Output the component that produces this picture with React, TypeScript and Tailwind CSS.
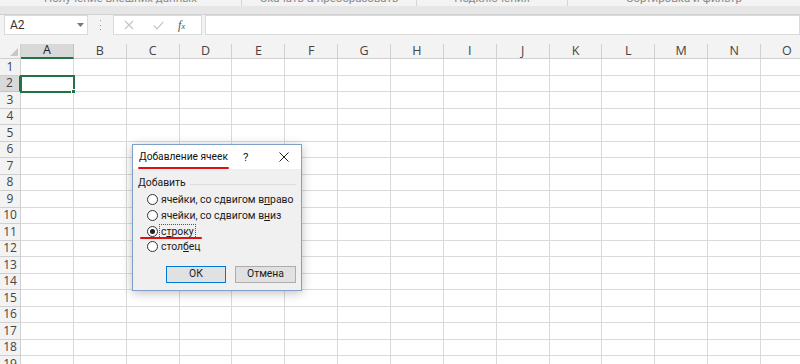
import React from "react";

const COLS = ["A", "B", "C", "D", "E", "F", "G", "H", "I", "J", "K", "L", "M", "N", "O"];
const ROWS = Array.from({ length: 19 }, (_, i) => i + 1);

const ui = { fontFamily: 'Roboto, "Noto Sans", sans-serif' };
const grid = { fontFamily: '"Open Sans", "Noto Sans", sans-serif' };

const Radio = ({ checked, children }: { checked?: boolean; children: React.ReactNode }) => (
  <div className="flex h-[15.7px] items-center whitespace-nowrap pl-[14px]">
    <span className="flex h-[11px] w-[11px] shrink-0 items-center justify-center rounded-full border border-[#333] bg-white">
      {checked && <span className="h-[5px] w-[5px] rounded-full bg-[#222]" />}
    </span>
    <span className={"ml-[2px] px-[1px] leading-[13px] " + (checked ? "outline outline-1 outline-dotted outline-[#555]" : "")}>
      {children}
    </span>
  </div>
);

const Dialog = () => (
  <div
    className="absolute left-[132px] top-[144px] flex h-[147px] w-[170px] flex-col border border-[#7f9fc8] bg-[#f0f0f0] text-[10.4px] text-[#1a1a1a] shadow-[0_2px_10px_rgba(0,0,0,0.25)]"
    style={ui}
  >
    <div className="relative flex h-[24px] items-center bg-white pl-[6px]">
      <span className="text-[10.2px] text-[#111]">Добавление ячеек</span>
      <span className="absolute left-[110px] top-[4px] text-[11.5px]">?</span>
      <svg className="absolute left-[146px] top-[7px]" width="10" height="10" viewBox="0 0 10 10">
        <path d="M0.5 0.5 L9.5 9.5 M9.5 0.5 L0.5 9.5" stroke="#222" strokeWidth="1" />
      </svg>
      {/* red annotation */}
      <div className="absolute left-[5px] top-[22px] h-[2px] w-[91px] rounded-full bg-[#e01010]" />
    </div>
    <div className="flex flex-1 flex-col pt-[7px]">
      <div className="flex h-[14px] items-center pl-[5px] pr-[5px]">
        <span className="leading-[14px]">Добавить</span>
        <span className="ml-[4px] mt-[2px] h-px flex-1 bg-[#dcdcdc]" />
      </div>
      <div className="relative mt-[2px] flex flex-col">
        <Radio>
          ячейки, со сдвигом в<u>п</u>раво
        </Radio>
        <Radio>
          ячейки, со сдвигом в<u>н</u>из
        </Radio>
        <Radio checked>
          с<u>т</u>року
        </Radio>
        <Radio>
          стол<u>б</u>ец
        </Radio>
        <div className="absolute left-[7px] top-[45px] h-[2px] w-[62px] rounded-full bg-[#e01010]" />
      </div>
      <div className="mt-[11px] flex gap-[9px] pl-[33px]">
        <button className="flex h-[17px] w-[60px] items-center justify-center border border-[#0078d7] bg-[#e1e1e1] text-[10.4px] leading-none">
          ОК
        </button>
        <button className="flex h-[17px] w-[61px] items-center justify-center border border-[#adadad] bg-[#e1e1e1] text-[10.4px] leading-none">
          Отмена
        </button>
      </div>
    </div>
  </div>
);

export default function App() {
  return (
    <div className="relative h-[364px] w-[800px] overflow-hidden bg-white" style={grid}>
      {/* ribbon group labels, cut off at the top */}
      <div className="flex h-[6px] overflow-hidden bg-[#f3f3f3] text-[11.5px] leading-[12px] text-[#8a8a8a]" style={ui}>
        <div className="flex w-[242px] justify-center border-r border-[#d6d6d6]">
          <span className="-mt-[8px] whitespace-nowrap">Получение внешних данных</span>
        </div>
        <div className="flex w-[175px] justify-center border-r border-[#d6d6d6]">
          <span className="-mt-[8px] whitespace-nowrap">Скачать &amp; преобразовать</span>
        </div>
        <div className="flex w-[151px] justify-center border-r border-[#d6d6d6]">
          <span className="-mt-[8px] whitespace-nowrap">Подключения</span>
        </div>
        <div className="flex flex-1 justify-center">
          <span className="-mt-[8px] whitespace-nowrap">Сортировка и фильтр</span>
        </div>
      </div>
      <div className="h-[9px] border-b border-[#d0d0d0] bg-[#e6e6e6]" />

      {/* formula bar */}
      <div className="flex h-[29px] items-start bg-[#f3f3f3] pl-[4px]">
        <div className="relative flex h-[20px] w-[84px] items-center border border-[#dadada] bg-white pl-[5px] text-[12px] text-[#333]" style={ui}>
          A2
          <svg className="absolute left-[72px] top-[7px]" width="7" height="4" viewBox="0 0 7 4">
            <path d="M0 0 H7 L3.5 4 Z" fill="#777" />
          </svg>
        </div>
        <div className="ml-[12px] mt-[5px] flex h-[10px] flex-col justify-between">
          <span className="h-px w-px bg-[#999]" />
          <span className="h-px w-px bg-[#999]" />
          <span className="h-px w-px bg-[#999]" />
        </div>
        <div className="ml-[12px] flex h-[20px] w-[89px] items-center border border-[#dadada] bg-white">
          <svg className="ml-[10px]" width="10" height="10" viewBox="0 0 10 10">
            <path d="M1 1 L9 9 M9 1 L1 9" stroke="#c4c4c4" strokeWidth="1.1" />
          </svg>
          <svg className="ml-[19px]" width="11" height="9" viewBox="0 0 11 9">
            <path d="M0.8 4.5 L4 7.8 L10.3 0.8" stroke="#c4c4c4" strokeWidth="1.2" fill="none" />
          </svg>
          <span
            className="ml-[14px] text-[12px] italic leading-none text-[#555]"
            style={{ fontFamily: '"Liberation Serif", "DejaVu Serif", serif' }}
          >
            f<span className="text-[9px]">x</span>
          </span>
        </div>
        <div className="ml-[3px] h-[20px] flex-1 border border-[#dadada] bg-white" />
      </div>

      {/* column headers */}
      <div className="flex h-[15px] text-[12.5px] leading-none text-[#444]">
        <div className="relative w-[21px] shrink-0 border-b border-r border-[#d0d0d0] bg-[#f3f3f3]">
          <svg className="absolute bottom-[2px] right-[2px]" width="8" height="8" viewBox="0 0 8 8">
            <path d="M8 0 V8 H0 Z" fill="#c8c8c8" />
          </svg>
        </div>
        {COLS.map((c) => (
          <div
            key={c}
            className={
              "flex w-[52.86px] shrink-0 items-center justify-center border-r " +
              (c === "A"
                ? "border-b-2 border-r-[#c4c4c4] border-b-[#217346] bg-[#d9d9d9] text-[#222]"
                : "border-b border-[#d0d0d0] bg-[#f3f3f3]")
            }
          >
            {c}
          </div>
        ))}
      </div>

      {/* rows */}
      {ROWS.map((r) => (
        <div key={r} className="flex h-[16.5px]">
          <div
            className={
              "flex w-[21px] shrink-0 items-center justify-center border-b border-r text-[12px] leading-none text-[#444] " +
              (r === 2 ? "border-b-[#c4c4c4] border-r-2 border-r-[#217346] bg-[#d9d9d9] text-[#222]" : "border-[#d0d0d0] bg-[#f3f3f3]")
            }
          >
            {r}
          </div>
          {COLS.map((c) => (
            <div
              key={c}
              className={
                "relative w-[52.86px] shrink-0 border-b border-r border-[#dadada] " +
                (r === 2 && c === "A" ? "outline outline-2 -outline-offset-1 outline-[#217346] z-10" : "")
              }
            >
              {r === 2 && c === "A" && (
                <span className="absolute -bottom-[3px] -right-[3px] h-[5px] w-[5px] border border-white bg-[#217346]" />
              )}
            </div>
          ))}
        </div>
      ))}

      <Dialog />
    </div>
  );
}
